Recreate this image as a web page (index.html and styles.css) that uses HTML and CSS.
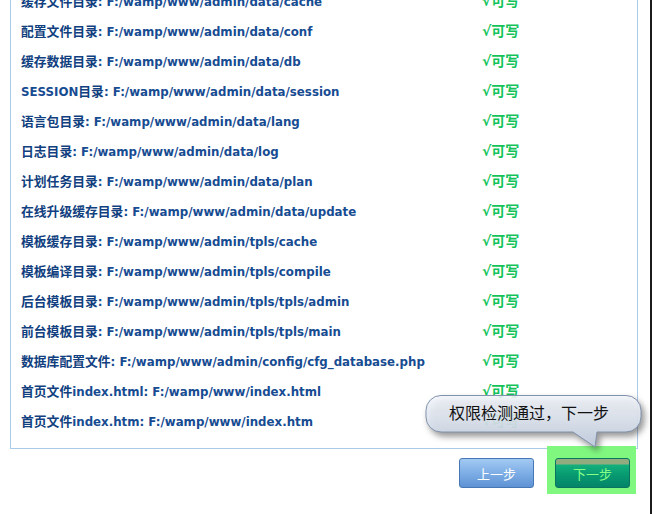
FILE: index.html
```html
<!DOCTYPE html>
<html lang="zh-CN">
<head>
  <meta charset="UTF-8">
  <title>安装 - 权限检测</title>
  <link rel="stylesheet" href="styles.css">
</head>
<body>
  <div class="frame">
    <div class="panel">
      <div class="row"><span class="path"><em>缓存文件目录</em>: F:/wamp/www/admin/data/cache</span><span class="ok">√可写</span></div>
      <div class="row"><span class="path"><em>配置文件目录</em>: F:/wamp/www/admin/data/conf</span><span class="ok">√可写</span></div>
      <div class="row"><span class="path"><em>缓存数据目录</em>: F:/wamp/www/admin/data/db</span><span class="ok">√可写</span></div>
      <div class="row"><span class="path">SESSION<em>目录</em>: F:/wamp/www/admin/data/session</span><span class="ok">√可写</span></div>
      <div class="row"><span class="path"><em>语言包目录</em>: F:/wamp/www/admin/data/lang</span><span class="ok">√可写</span></div>
      <div class="row"><span class="path"><em>日志目录</em>: F:/wamp/www/admin/data/log</span><span class="ok">√可写</span></div>
      <div class="row"><span class="path"><em>计划任务目录</em>: F:/wamp/www/admin/data/plan</span><span class="ok">√可写</span></div>
      <div class="row"><span class="path"><em>在线升级缓存目录</em>: F:/wamp/www/admin/data/update</span><span class="ok">√可写</span></div>
      <div class="row"><span class="path"><em>模板缓存目录</em>: F:/wamp/www/admin/tpls/cache</span><span class="ok">√可写</span></div>
      <div class="row"><span class="path"><em>模板编译目录</em>: F:/wamp/www/admin/tpls/compile</span><span class="ok">√可写</span></div>
      <div class="row"><span class="path"><em>后台模板目录</em>: F:/wamp/www/admin/tpls/tpls/admin</span><span class="ok">√可写</span></div>
      <div class="row"><span class="path"><em>前台模板目录</em>: F:/wamp/www/admin/tpls/tpls/main</span><span class="ok">√可写</span></div>
      <div class="row"><span class="path"><em>数据库配置文件</em>: F:/wamp/www/admin/config/cfg_database.php</span><span class="ok">√可写</span></div>
      <div class="row"><span class="path"><em>首页文件</em>index.html: F:/wamp/www/index.html</span><span class="ok">√可写</span></div>
      <div class="row"><span class="path"><em>首页文件</em>index.htm: F:/wamp/www/index.htm</span><span class="ok">√可写</span></div>
    </div>

    <div class="actions">
      <button type="button" class="btn btn-prev">上一步</button>
      <span class="hint-ring">
        <button type="button" class="btn btn-next">下一步</button>
      </span>
    </div>

    <!-- speech bubble pointing at the next button -->
    <div class="bubble">
      <svg class="bubble-shape" width="222" height="58" viewBox="0 0 222 58">
        <defs>
          <linearGradient id="bubbleFill" x1="0" y1="0" x2="0" y2="1">
            <stop offset="0" stop-color="#f4f7fc"/>
            <stop offset="0.45" stop-color="#e3eaf5"/>
            <stop offset="1" stop-color="#c3d0e3"/>
          </linearGradient>
        </defs>
        <path d="M16,1.5 H201 A15,15 0 0 1 216,16.5 V23 A15,15 0 0 1 201,38 H172 L170,53 L148,38 H16 A15,15 0 0 1 1,23 V16.5 A15,15 0 0 1 16,1.5 Z"
              fill="url(#bubbleFill)" fill-opacity="0.88" stroke="#8192ab" stroke-width="1"/>
      </svg>
      <span class="bubble-text">权限检测通过，下一步</span>
    </div>
  </div>
</body>
</html>
```

FILE: styles.css
```css
body {
  margin: 0;
  background: #fff;
  font-family: "DejaVu Sans", "Noto Sans CJK SC", sans-serif;
}

.frame {
  position: relative;
  width: 652px;
  height: 514px;
  overflow: hidden;
  border-right: 2px solid #1c1c1c;
  box-sizing: border-box;
}

.panel {
  margin: -16px 12px 0 10px;
  padding-bottom: 13px;
  border: 1px solid #a9cbe9;
}

.row {
  display: grid;
  grid-template-columns: 461px 1fr;
  align-items: center;
  height: 30px;
  padding-left: 10px;
}

.path {
  color: #174c92;
  font-size: 11.8px;
  font-weight: bold;
  white-space: nowrap;
}

/* chinese labels sit a little larger than the latin paths */
.path em {
  font-family: "Noto Sans CJK SC", sans-serif;
  font-style: normal;
  font-size: 12.8px;
  color: #113f80;
}

.ok {
  color: #13c35a;
  font-size: 14px;
  font-weight: bold;
}

.actions {
  display: flex;
  justify-content: flex-end;
  align-items: flex-start;
  margin-top: -3px;
  padding-right: 14px;
}

.btn {
  width: 75px;
  height: 30px;
  padding: 0;
  border-radius: 3px;
  font-family: "Noto Sans CJK SC", sans-serif;
  font-size: 13px;
  cursor: pointer;
}

.btn-prev {
  margin: 12px 13px 0 0;
  color: #fff;
  border: 1px solid #4677b4;
  background: linear-gradient(#a3c9f2, #7eaee6 50%, #5e92d3);
}

.hint-ring {
  display: inline-block;
  padding: 12px 6px 6px 8px;
  background: #80f880;
}

.btn-next {
  display: block;
  color: #86ff86;
  border: 1px solid #0b7461;
  background: linear-gradient(#92ac80 0, #92ac80 5px, #13b07c 6px, #079870 60%, #048468);
}

.bubble {
  position: absolute;
  left: 425px;
  top: 394px;
  width: 222px;
  height: 58px;
}

.bubble-shape {
  display: block;
  filter: drop-shadow(3px 4px 3px rgba(40, 40, 40, 0.55));
}

.bubble-text {
  position: absolute;
  left: 24px;
  top: 8px;
  font-family: "Noto Sans CJK SC", sans-serif;
  font-size: 16px;
  line-height: 20px;
  color: #111;
  white-space: nowrap;
}
```
